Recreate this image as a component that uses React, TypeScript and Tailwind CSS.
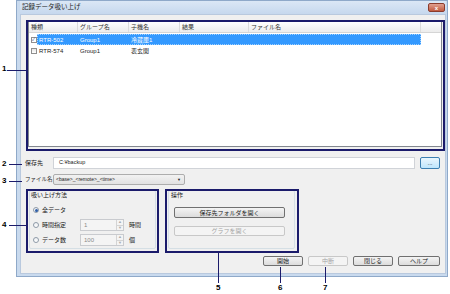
import React from "react";

const F = '"Liberation Sans", "Noto Sans CJK JP", sans-serif';

function Spin({ value }: { value: string }) {
  return (
    <div className="flex h-[12px] w-[44px] border border-[#c9cbcf] bg-[#f4f4f4]">
      <div className="flex-1 pl-[3px] text-[6px] leading-[10px] text-[#8a8a8a]">{value}</div>
      <div className="flex w-[7px] flex-col border-l border-[#d4d4d4]">
        <div className="flex flex-1 items-center justify-center border-b border-[#d4d4d4] text-[4px] leading-none text-[#aaa]">▲</div>
        <div className="flex flex-1 items-center justify-center text-[4px] leading-none text-[#aaa]">▼</div>
      </div>
    </div>
  );
}

function Radio({ checked }: { checked?: boolean }) {
  return (
    <div className="flex h-[6px] w-[6px] items-center justify-center rounded-full border border-[#8f9aa8] bg-gradient-to-b from-[#eef0f3] to-white">
      {checked && <div className="h-[3px] w-[3px] rounded-full bg-[#2f5fa8]" />}
    </div>
  );
}

function Btn({ label, disabled, className = "" }: { label: string; disabled?: boolean; className?: string }) {
  return (
    <div
      className={`flex items-center justify-center whitespace-nowrap rounded-[2px] border ${
        disabled
          ? "border-[#c8c8c8] bg-[#f4f4f4] text-[#a4a4a4]"
          : "border-[#707070] bg-gradient-to-b from-[#f4f4f4] to-[#dcdcdc] text-[#222]"
      } text-[6px] leading-none ${className}`}
    >
      {label}
    </div>
  );
}

export default function App() {
  const cols = [
    { label: "種類", w: 49 },
    { label: "グループ名", w: 51 },
    { label: "子機名", w: 51 },
    { label: "結果", w: 69 },
    { label: "ファイル名", w: 172 },
  ];
  return (
    <div className="relative h-[294px] w-[450px] overflow-hidden bg-white text-[#1a1a1a]" style={{ fontFamily: F }}>
      <div className="ml-[16px] flex h-[277px] w-[432px] flex-col border border-[#8fa9c9] bg-[#c9daee] pb-[2px] pl-[3px] pr-[1px]">
        {/* title bar */}
        <div className="flex h-[13px] items-center bg-gradient-to-b from-[#dbe7f5] to-[#c6d8ee] pl-[2px] pr-[1px]">
          <span className="whitespace-nowrap text-[6.5px] leading-none text-[#222]">記録データ吸い上げ</span>
          <div className="ml-auto flex h-[9px] w-[17px] items-center justify-center rounded-[2px] border border-[#8b3b2c] bg-gradient-to-b from-[#e0a090] to-[#c05a40] text-[6px] font-bold leading-none text-white">
            x
          </div>
        </div>
        {/* content */}
        <div className="flex flex-1 flex-col border border-[#b9c9de] bg-[#f0f0f0]">
          {/* list */}
          <div className="ml-[7px] mt-[6px] h-[126px] w-[414px] border border-[#828790] bg-white">
            <div className="flex h-[11px] border-b border-[#d5d5d5] bg-gradient-to-b from-white to-[#ececec]">
              {cols.map((c) => (
                <div
                  key={c.label}
                  className="flex items-center whitespace-nowrap border-r border-[#dcdcdc] pl-[2px] text-[6px] leading-none text-[#333]"
                  style={{ width: c.w }}
                >
                  {c.label}
                </div>
              ))}
              <div className="flex-1" />
            </div>
            {/* row 1 */}
            <div className="mt-[1px] flex h-[11px] items-center">
              <div className="flex w-[8px] items-center justify-center pl-[1px]">
                <div className="flex h-[6px] w-[6px] items-center justify-center border border-[#8f8f8f] bg-white text-[5px] leading-none text-[#2a4a8a]">✓</div>
              </div>
              <div className="flex h-[11px] w-[384px] items-center border border-dotted border-[#9fd0ff] bg-[#3399ff] text-[6px] leading-none text-white">
                <div className="w-[40px] pl-[1px]">RTR-502</div>
                <div className="w-[51px] pl-[2px]">Group1</div>
                <div className="w-[51px] pl-[2px]">冷蔵庫1</div>
              </div>
            </div>
            {/* row 2 */}
            <div className="flex h-[12px] items-center">
              <div className="flex w-[8px] items-center justify-center pl-[1px]">
                <div className="h-[6px] w-[6px] border border-[#8f8f8f] bg-gradient-to-b from-[#e6e6e6] to-white" />
              </div>
              <div className="flex w-[384px] items-center pl-[1px] text-[6px] leading-none text-[#222]">
                <div className="w-[40px] pl-[1px]">RTR-574</div>
                <div className="w-[51px] pl-[2px]">Group1</div>
                <div className="w-[51px] pl-[2px]">表玄関</div>
              </div>
            </div>
          </div>

          {/* save path */}
          <div className="mt-[9px] flex h-[13px] items-center">
            <div className="ml-[4px] w-[28px] whitespace-nowrap text-[6px] leading-none">保存先</div>
            <div className="flex h-[12px] w-[362px] items-center border border-[#d0d3d8] bg-white pl-[5px] text-[5.5px] leading-none">
              C:¥backup
            </div>
            <div className="ml-[5px] flex h-[12px] w-[20px] items-center justify-center rounded-[2px] border border-[#3c7fb1] bg-gradient-to-b from-[#eaf6fd] to-[#bee6fd] text-[6px] leading-none">
              ...
            </div>
          </div>

          {/* file name */}
          <div className="mt-[5px] flex h-[11px] items-center">
            <div className="ml-[4px] w-[28px] whitespace-nowrap text-[5.5px] leading-none">ファイル名</div>
            <div className="flex h-[11px] w-[132px] items-center rounded-[2px] border border-[#adadad] bg-gradient-to-b from-[#f2f2f2] to-[#e2e2e2] pl-[2px] pr-[3px] text-[5px] leading-none">
              <span className="whitespace-nowrap">&lt;base&gt;_&lt;remote&gt;_&lt;time&gt;</span>
              <span className="ml-auto text-[4px]">▼</span>
            </div>
          </div>

          {/* groups */}
          <div className="mt-[5px] flex h-[61px]">
            <div className="relative ml-[8px] h-[59px] w-[127px] rounded-[2px] border border-[#d5dfe5]">
              <div className="absolute left-[1px] top-[1px] whitespace-nowrap text-[6px] leading-none">吸い上げ方法</div>
              <div className="ml-[3px] mt-[16px] flex items-center gap-[3px] text-[6px] leading-none">
                <Radio checked />
                <span>全データ</span>
              </div>
              <div className="ml-[3px] mt-[6px] flex items-center text-[6px] leading-none">
                <Radio />
                <span className="ml-[3px] w-[38px]">時間指定</span>
                <Spin value="1" />
                <span className="ml-[5px]">時間</span>
              </div>
              <div className="ml-[3px] mt-[3px] flex items-center text-[6px] leading-none">
                <Radio />
                <span className="ml-[3px] w-[38px]">データ数</span>
                <Spin value="100" />
                <span className="ml-[5px]">個</span>
              </div>
            </div>
            <div className="relative ml-[12px] h-[59px] w-[127px] rounded-[2px] border border-[#d5dfe5]">
              <div className="absolute left-[2px] top-[1px] text-[6px] leading-none">操作</div>
              <Btn label="保存先フォルダを開く" className="ml-[5px] mt-[16px] h-[11px] w-[111px]" />
              <Btn label="グラフを開く" disabled className="ml-[5px] mt-[8px] h-[10px] w-[111px]" />
            </div>
          </div>

          {/* bottom buttons */}
          <div className="mt-[5px] flex justify-end gap-[5px] pr-[5px]">
            <Btn label="開始" className="h-[10px] w-[40px]" />
            <Btn label="中断" disabled className="h-[10px] w-[40px]" />
            <Btn label="閉じる" className="h-[10px] w-[40px]" />
            <Btn label="ヘルプ" className="h-[10px] w-[42px]" />
          </div>
        </div>
      </div>

      {/* annotation boxes */}
      <div className="absolute left-[26px] top-[20px] h-[131px] w-[419px] border-2 border-[#1b1b6b]" />
      <div className="absolute left-[26px] top-[189px] h-[64px] w-[133px] border-2 border-[#1b1b6b]" />
      <div className="absolute left-[165px] top-[189px] h-[64px] w-[134px] border-2 border-[#1b1b6b]" />

      {/* callouts */}
      <div className="absolute left-[2px] top-[65px] text-[8px] font-bold leading-none text-black">1</div>
      <div className="absolute left-[7px] top-[70px] h-[1px] w-[19px] bg-[#1b1b6b]" />
      <div className="absolute left-[2px] top-[160px] text-[8px] font-bold leading-none text-black">2</div>
      <div className="absolute left-[9px] top-[164px] h-[1px] w-[13px] bg-[#1b1b6b]" />
      <div className="absolute left-[2px] top-[177px] text-[8px] font-bold leading-none text-black">3</div>
      <div className="absolute left-[9px] top-[181px] h-[1px] w-[13px] bg-[#1b1b6b]" />
      <div className="absolute left-[2px] top-[221px] text-[8px] font-bold leading-none text-black">4</div>
      <div className="absolute left-[9px] top-[225px] h-[1px] w-[17px] bg-[#1b1b6b]" />
      <div className="absolute left-[218px] top-[253px] h-[30px] w-[1px] bg-[#1b1b6b]" />
      <div className="absolute left-[216px] top-[284px] text-[8px] font-bold leading-none text-black">5</div>
      <div className="absolute left-[280px] top-[267px] h-[16px] w-[1px] bg-[#1b1b6b]" />
      <div className="absolute left-[278px] top-[284px] text-[8px] font-bold leading-none text-black">6</div>
      <div className="absolute left-[325px] top-[267px] h-[16px] w-[1px] bg-[#1b1b6b]" />
      <div className="absolute left-[323px] top-[284px] text-[8px] font-bold leading-none text-black">7</div>
    </div>
  );
}
